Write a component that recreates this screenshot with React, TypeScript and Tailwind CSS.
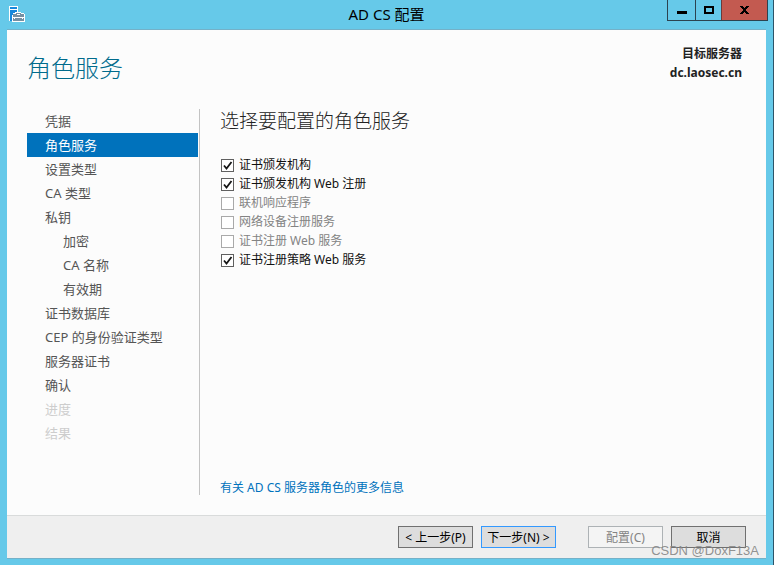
import { useState } from "react";
import clsx from "clsx";

type Step = { label: string; nested?: boolean; disabled?: boolean };

const steps: Step[] = [
  { label: "凭据" },
  { label: "角色服务" },
  { label: "设置类型" },
  { label: "CA 类型" },
  { label: "私钥" },
  { label: "加密", nested: true },
  { label: "CA 名称", nested: true },
  { label: "有效期", nested: true },
  { label: "证书数据库" },
  { label: "CEP 的身份验证类型" },
  { label: "服务器证书" },
  { label: "确认" },
  { label: "进度", disabled: true },
  { label: "结果", disabled: true },
];

const roles = [
  { id: "ca", label: "证书颁发机构", checked: true, disabled: false },
  { id: "ca-web", label: "证书颁发机构 Web 注册", checked: true, disabled: false },
  { id: "ocsp", label: "联机响应程序", checked: false, disabled: true },
  { id: "ndes", label: "网络设备注册服务", checked: false, disabled: true },
  { id: "ces", label: "证书注册 Web 服务", checked: false, disabled: true },
  { id: "cep", label: "证书注册策略 Web 服务", checked: true, disabled: false },
];

function ServerIcon() {
  return (
    <svg width="16" height="16" viewBox="0 0 16 16" shapeRendering="crispEdges" aria-hidden="true">
      <path d="M0 0h9v6h3v1h3v1h1v8H3V15H0z" fill="#fff" />
      <path d="M1 1h7v2H1zM1 5h7v1H6v1H4v1H3v6H1z" fill="#1688dc" />
      <path d="M1 4h7v2H6v1H4v2H3v6H1z" fill="#1688dc" />
      <path d="M4 8h3V7h5v1h3v3H4zM4 12h1v1h1v-1h7v1h1v-1h1v3H4z" fill="#7590a3" />
      <path d="M8 8h3v1H8z" fill="#fff" />
    </svg>
  );
}

function TitleBar() {
  return (
    <header className="grid h-[29px] shrink-0 grid-cols-[1fr_auto_1fr] items-start">
      <div className="pt-[6px] pl-[2px]">
        <ServerIcon />
      </div>
      <h1 className="text-[15px] leading-[28px] text-black">AD CS 配置</h1>
      <div className="-mr-[2px] flex h-[21px] justify-self-end border border-t-0 border-[#2c4350]">
        <button type="button" aria-label="最小化" className="flex w-[28px] items-center justify-center border-r border-[#2c4350]">
          <svg width="10" height="10" shapeRendering="crispEdges" aria-hidden="true">
            <path d="M0 6h10v3H0z" />
          </svg>
        </button>
        <button type="button" aria-label="最大化" className="flex w-[25px] items-center justify-center">
          <svg width="10" height="10" shapeRendering="crispEdges" aria-hidden="true">
            <path d="M0 1h10v8H0zM2 3v4h6V3z" fillRule="evenodd" />
          </svg>
        </button>
        <button type="button" aria-label="关闭" className="flex w-[46px] items-center justify-center border-l border-[#6b3a3a] bg-[#c35a50]">
          <svg width="9" height="8" viewBox="0 0 9 8" shapeRendering="crispEdges" aria-hidden="true">
            <path d="M0 0h3v1h1v1h1V1h1V0h3v1H8v1H7v1H6v2h1v1h1v1h1v1H6V7H5V6H4v1H3v1H0V7h1V6h1V5h1V3H2V2H1V1H0z" />
          </svg>
        </button>
      </div>
    </header>
  );
}

function RoleOption({ role }: { role: (typeof roles)[number] }) {
  const [checked, setChecked] = useState(role.checked);
  return (
    <div className="flex h-[19px] items-center gap-[5px]">
      <span className="grid size-[13px] shrink-0">
        <input
          id={role.id}
          type="checkbox"
          checked={checked}
          disabled={role.disabled}
          onChange={(e) => setChecked(e.target.checked)}
          className="col-start-1 row-start-1 size-[13px] appearance-none border border-[#606060] bg-white disabled:border-[#a9a9a9]"
        />
        {checked && (
          <svg className="pointer-events-none col-start-1 row-start-1" width="13" height="13" viewBox="0 0 13 13" aria-hidden="true">
            <path d="M3 6.5 5.5 9.5 10.5 3" fill="none" stroke="#151515" strokeWidth="1.8" />
          </svg>
        )}
      </span>
      <label htmlFor={role.id} className={clsx("pb-[2px] text-[12px] leading-[17px]", role.disabled ? "text-[#838383]" : "text-[#111]")}>
        {role.label}
      </label>
    </div>
  );
}

const buttonBase = "h-[22px] w-[75px] border pt-px text-[12px] leading-[19px] whitespace-nowrap";

export default function App() {
  return (
    <div className="flex min-h-screen flex-col border-r border-[#2c5468] bg-[#66c9e9] px-[7px] pb-[6px] font-['Noto_Sans','Noto_Sans_CJK_SC',sans-serif]">
      <TitleBar />
      <div className="flex grow flex-col border-y border-[#74b1c8] bg-[#fcfcfc]">
        <div className="flex h-[79px] shrink-0 items-start justify-between pr-[24px] pl-[20px]">
          <h2 className="pt-[20px] text-[24px] leading-[36px] font-light text-[#006b8c]">角色服务</h2>
          <div className="pt-[14px] text-right text-[12px] leading-[19px] font-bold text-[#222]">
            <p>目标服务器</p>
            <p>dc.laosec.cn</p>
          </div>
        </div>

        <div className="flex grow pb-[20px] pl-[20px]">
          <nav aria-label="步骤" className="w-[173px] shrink-0 border-r border-[#c3c3c3] pr-px">
            <ul>
              {steps.map((step, i) => (
                <li key={step.label}>
                  <button
                    type="button"
                    disabled={step.disabled}
                    aria-current={i === 1 ? "step" : undefined}
                    className={clsx(
                      "block h-6 w-full text-left text-[13px] leading-6",
                      step.nested ? "pl-9" : "pl-[18px]",
                      i === 1 ? "bg-[#0072bc] text-white" : step.disabled ? "text-[#cdcdcd]" : "text-[#555]",
                    )}
                  >
                    {step.label}
                  </button>
                </li>
              ))}
            </ul>
          </nav>

          <main className="flex grow flex-col pl-5">
            <h3 className="mb-[23px] text-[19px] leading-6 font-light text-[#222]">选择要配置的角色服务</h3>
            <div className="pl-px">
              {roles.map((role) => (
                <RoleOption key={role.id} role={role} />
              ))}
            </div>
            <a href="#more" className="mt-auto self-start text-[12px] leading-[14px] text-[#0072bc]">
              有关 AD CS 服务器角色的更多信息
            </a>
          </main>
        </div>

        <footer className="relative flex h-[43px] shrink-0 items-start justify-end gap-2 border-t border-[#d9dbdb] bg-[#efefef] pt-[10px] pr-5">
          <button type="button" className={clsx(buttonBase, "border-[#707070] bg-[#dddddd] text-black")}>
            &lt; 上一步(P)
          </button>
          <button type="button" className={clsx(buttonBase, "mr-6 border-[#3399ff] bg-[#dddddd] text-black")}>
            下一步(N) &gt;
          </button>
          <button type="button" disabled className={clsx(buttonBase, "border-[#adb2b5] bg-[#f4f4f4] text-[#838383]")}>
            配置(C)
          </button>
          <button type="button" className={clsx(buttonBase, "border-[#707070] bg-[#dddddd] text-black")}>
            取消
          </button>
          <span className="pointer-events-none absolute right-[7px] -bottom-px font-['Liberation_Sans',sans-serif] text-[13px] leading-4 text-[#858585]/90">
            CSDN @DoxF13A
          </span>
        </footer>
      </div>
    </div>
  );
}
